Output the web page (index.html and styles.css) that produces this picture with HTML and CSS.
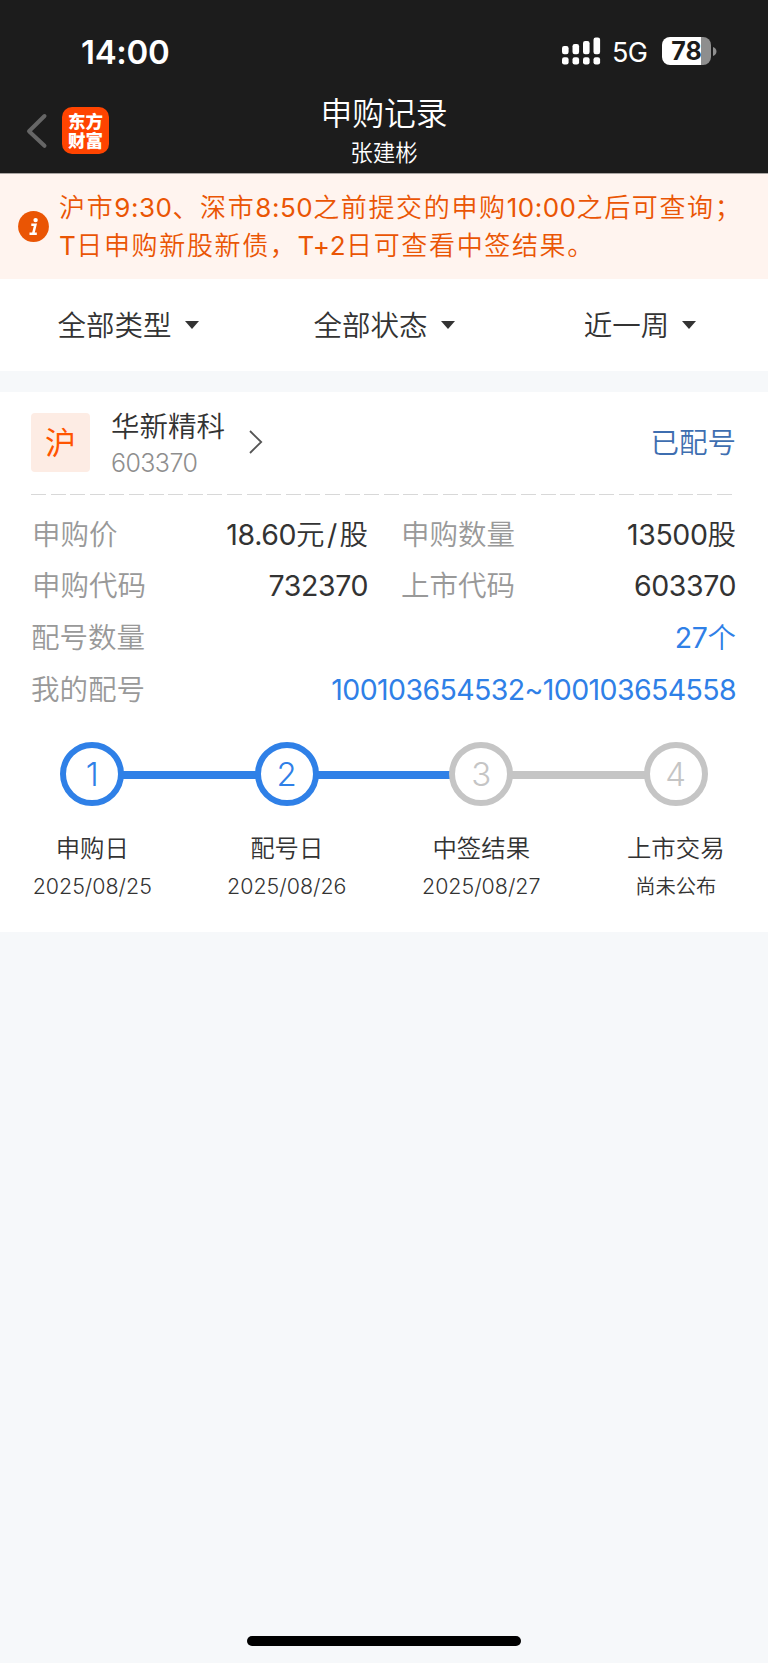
FILE: index.html
```
<!DOCTYPE html>
<html lang="zh-CN">
<head>
<meta charset="utf-8">
<title>申购记录</title>
<link rel="stylesheet" href="styles.css">
</head>
<body>
<div class="page">
  <header class="top">
    <div class="status">
      <span class="clock">14:00</span>
      <div class="indicators">
        <svg class="signal" width="40" height="28" viewBox="0 0 40 28" fill="#fff">
          <rect x="1" y="9" width="6.6" height="8.3" rx="2.2"/><rect x="11.5" y="7" width="6.6" height="10.3" rx="2.2"/><rect x="22" y="4" width="6.6" height="13.3" rx="2.2"/><rect x="32.5" y="0.5" width="6.6" height="16.8" rx="2.2"/>
          <rect x="1" y="20.3" width="6.6" height="7.2" rx="2.2"/><rect x="11.5" y="20.3" width="6.6" height="7.2" rx="2.2"/><rect x="22" y="20.3" width="6.6" height="7.2" rx="2.2"/><rect x="32.5" y="20.3" width="6.6" height="7.2" rx="2.2"/>
        </svg>
        <span class="network">5G</span>
        <span class="battery">78</span>
        <svg class="battery-tip" width="4" height="9" viewBox="0 0 4 9"><path d="M0 0C4.6 1.2 4.6 7.8 0 9Z" fill="#8e8e8e"/></svg>
      </div>
    </div>
    <div class="nav">
      <svg class="back" width="22" height="36" viewBox="0 0 22 36"><path d="M18.5 3L3 18.2L18.5 32.8" fill="none" stroke="#666" stroke-width="4" stroke-linecap="round" stroke-linejoin="round"/></svg>
      <div class="logo">东方<br>财富</div>
      <div class="titles">
        <h1>申购记录</h1>
        <p>张建彬</p>
      </div>
    </div>
  </header>

  <section class="notice">
    <svg class="info" width="31" height="31" viewBox="0 0 31 31"><circle cx="15.5" cy="15.5" r="15.4" fill="#ea5504"/><circle cx="17.6" cy="9.1" r="2.2" fill="#fff"/><path d="M13.3 13.8H17.4L15.2 22.6M11.5 22.8H18.8" fill="none" stroke="#fff" stroke-width="2.5"/></svg>
    <p>沪市<span class="n">9:30</span>、深市<span class="n">8:50</span>之前提交的申购<span class="n">10:00</span>之后可查询；<br><span class="n">T</span>日申购新股新债，<span class="n">T+2</span>日可查看中签结果。</p>
  </section>

  <nav class="filters">
    <div class="filter"><span>全部类型</span><i class="caret"></i></div>
    <div class="filter"><span>全部状态</span><i class="caret"></i></div>
    <div class="filter"><span>近一周</span><i class="caret"></i></div>
  </nav>

  <main class="card">
    <div class="stock">
      <span class="market">沪</span>
      <div class="identity">
        <span class="name">华新精科</span>
        <span class="code">603370</span>
      </div>
      <svg class="chevron" width="14" height="24" viewBox="0 0 14 24"><path d="M1 1L12.2 12L1 23" fill="none" stroke="#555" stroke-width="1.8"/></svg>
      <span class="state">已配号</span>
    </div>
    <div class="divider"></div>
    <div class="details">
      <div class="row"><span class="label in">申购价</span><span class="value"><span class="n">18.60</span>元<span class="n slash">/</span>股</span></div>
      <div class="row"><span class="label">申购数量</span><span class="value"><span class="n">13500</span>股</span></div>
      <div class="row"><span class="label in">申购代码</span><span class="value"><span class="n">732370</span></span></div>
      <div class="row"><span class="label">上市代码</span><span class="value"><span class="n">603370</span></span></div>
      <div class="row wide"><span class="label">配号数量</span><span class="value link"><span class="n">27</span>个</span></div>
      <div class="row wide"><span class="label">我的配号</span><span class="value link"><span class="n range">100103654532~100103654558</span></span></div>
    </div>
    <div class="steps">
      <div class="step done"><span class="dot">1</span><span class="stage">申购日</span><span class="date">2025/08/25</span></div>
      <div class="step done"><span class="dot">2</span><span class="stage">配号日</span><span class="date">2025/08/26</span></div>
      <div class="step"><span class="dot">3</span><span class="stage">中签结果</span><span class="date">2025/08/27</span></div>
      <div class="step"><span class="dot">4</span><span class="stage">上市交易</span><span class="date text">尚未公布</span></div>
    </div>
  </main>
  <div class="home"></div>
</div>
</body>
</html>
```
FILE: styles.css
```
* { box-sizing: border-box; }
body {
  margin: 0;
  background: #f6f8fa;
  color: #333;
  font-family: "Noto Sans CJK SC", Inter, sans-serif;
  font-size: 28.5px;
  font-weight: 350;
}
h1, p { margin: 0; font-weight: inherit; }
svg { display: block; flex: none; }
.page { width: 768px; height: 1663px; display: flex; flex-direction: column; }
.n { font-family: Inter, sans-serif; font-weight: 400; line-height: 0; letter-spacing: -0.4px; }

.top { height: 174px; background: #1c1c1c; color: #fff; border-bottom: 1px solid #aaa5a2; }
.status { height: 92px; padding: 10px 51px 0 81px; display: flex; align-items: center; justify-content: space-between; font-family: Inter, sans-serif; }
.clock { padding-top: 1px; font-size: 33px; font-weight: 600; letter-spacing: -0.3px; }
.indicators { display: flex; align-items: center; }
.network { margin-left: 11px; width: 50px; padding-top: 2px; font-size: 27px; font-weight: 400; letter-spacing: -0.6px; }
.battery { width: 49px; height: 28px; border-radius: 8px; background: linear-gradient(90deg, #fff 79%, #8e8e8e 79%); color: #1c1c1c; font-size: 25px; line-height: 29px; font-weight: 700; text-align: center; letter-spacing: 0; }
.battery-tip { margin-left: 2px; }
.nav { position: relative; height: 81px; padding: 0 0 5px 26px; display: flex; align-items: center; }
.back { margin-top: 2px; }
.logo { width: 47px; height: 47px; margin-left: 14px; padding-top: 4px; border-radius: 10px; background: #ff4400; font-size: 17.5px; line-height: 19px; font-weight: 900; text-align: center; }
.titles { position: absolute; inset: -3px 200px 0; display: flex; flex-direction: column; align-items: center; }
.titles h1 { font-size: 31.8px; line-height: 44px; }
.titles p { margin-top: 1px; font-size: 22.5px; line-height: 34px; }

.notice { height: 105px; background: #fff4ef; color: #ea5504; display: flex; align-items: center; padding-left: 18px; }
.notice p { margin: -4px 0 0 10px; font-size: 26px; letter-spacing: 1.65px; line-height: 37.5px; white-space: nowrap; }
.notice .n { letter-spacing: 0.5px; }

.filters { height: 92px; background: #fff; display: grid; grid-template-columns: repeat(3, 1fr); margin-bottom: 20.5px; }
.filter { display: flex; align-items: center; justify-content: center; gap: 13px; }
.filter span { padding-bottom: 3px; }
.caret { border: 7px solid transparent; border-top: 8px solid #333; border-bottom: 0; }

.card { height: 540.5px; background: #fff; padding: 0 32px 0 31px; }
.stock { height: 102px; display: flex; align-items: center; }
.market { width: 59px; height: 59px; border-radius: 4px; background: #fdece4; color: #ff5400; font-size: 31px; line-height: 56px; font-weight: 400; text-align: center; }
.identity { width: 116px; margin-left: 21px; padding-top: 2px; display: flex; flex-direction: column; }
.name { line-height: 36px; }
.code { padding-top: 2px; font-family: Inter, sans-serif; font-size: 25px; font-weight: 300; line-height: 36px; letter-spacing: -0.6px; color: #8e8e8e; }
.chevron { margin: -1px 0 0 22px; }
.state { margin-left: auto; padding-bottom: 4px; color: #3e6eb0; }
.divider { width: 703px; height: 1px; background: repeating-linear-gradient(90deg, #d8d8d8 0 15px, transparent 15px 19.6px); }
.details { padding-top: 12px; display: grid; grid-template-columns: 337px 335px; column-gap: 33px; grid-auto-rows: 51.6px; }
.row { display: flex; align-items: center; justify-content: space-between; white-space: nowrap; }
.row.wide { grid-column: 1 / -1; }
.label { color: #999; }
.label.in { padding-left: 1px; }
.slash { padding: 0 2.5px; }
.link { color: #2f80e7; }
.range { letter-spacing: -0.6px; }
.steps { margin: 29px -36px 0; display: grid; grid-template-columns: repeat(4, 194.5px); }
.step { position: relative; display: flex; flex-direction: column; align-items: center; }
.step + .step::before { content: ""; position: absolute; top: 29px; right: 127px; width: 135px; height: 8px; background: #c5c5c5; }
.step.done + .step::before { background: #2f80e7; }
.dot { position: relative; width: 64px; height: 64px; border: 6px solid #c5c5c5; border-radius: 50%; background: #fff; color: #c5c5c5; font: 300 33px/52px Inter, sans-serif; text-align: center; }
.done .dot { border-color: #2f80e7; color: #2f80e7; }
.stage { margin-top: 23px; font-size: 24.4px; line-height: 36px; }
.date { margin-top: 3px; font-family: Inter, sans-serif; font-size: 21.4px; line-height: 36px; }
.date.text { margin-top: 2px; font-family: "Noto Sans CJK SC", sans-serif; font-size: 20.3px; }
.home { width: 274px; height: 10px; margin: auto auto 17px; border-radius: 5px; background: #000; }
```
